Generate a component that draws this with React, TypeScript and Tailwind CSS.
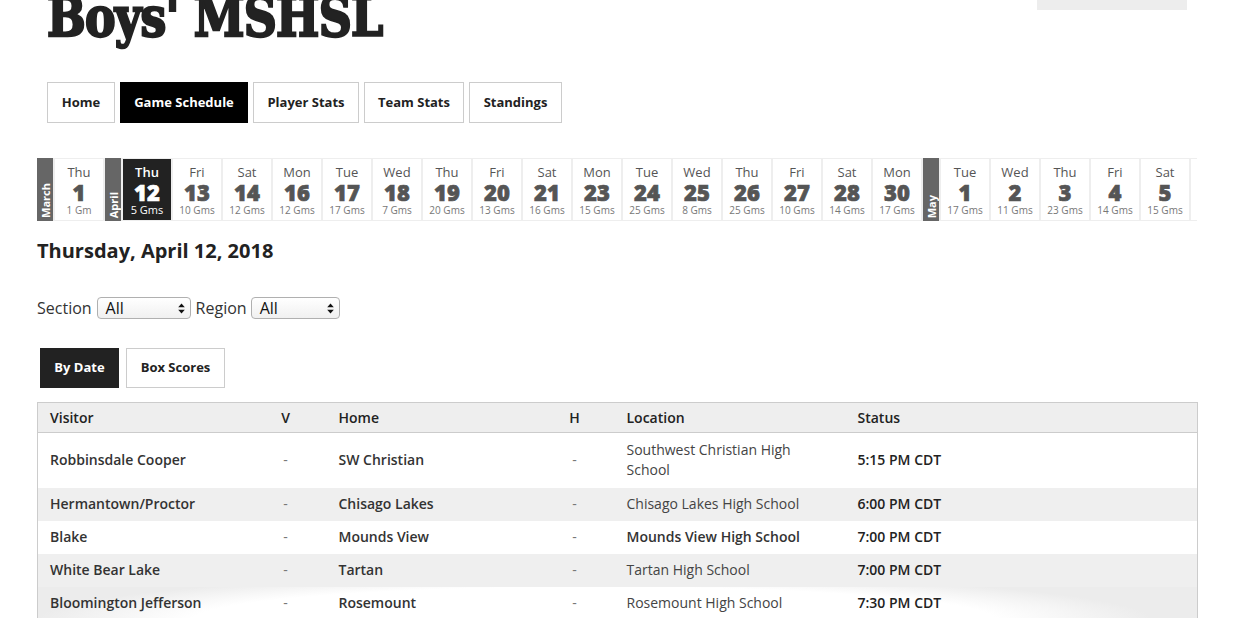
import React from "react";

type Day = { d: string; n: number; g: string; sel?: boolean };
type Seg = { month: string; days: Day[] };

const segs: Seg[] = [
  { month: "March", days: [{ d: "Thu", n: 1, g: "1 Gm" }] },
  {
    month: "April",
    days: [
      { d: "Thu", n: 12, g: "5 Gms", sel: true },
      { d: "Fri", n: 13, g: "10 Gms" },
      { d: "Sat", n: 14, g: "12 Gms" },
      { d: "Mon", n: 16, g: "12 Gms" },
      { d: "Tue", n: 17, g: "17 Gms" },
      { d: "Wed", n: 18, g: "7 Gms" },
      { d: "Thu", n: 19, g: "20 Gms" },
      { d: "Fri", n: 20, g: "13 Gms" },
      { d: "Sat", n: 21, g: "16 Gms" },
      { d: "Mon", n: 23, g: "15 Gms" },
      { d: "Tue", n: 24, g: "25 Gms" },
      { d: "Wed", n: 25, g: "8 Gms" },
      { d: "Thu", n: 26, g: "25 Gms" },
      { d: "Fri", n: 27, g: "10 Gms" },
      { d: "Sat", n: 28, g: "14 Gms" },
      { d: "Mon", n: 30, g: "17 Gms" },
    ],
  },
  {
    month: "May",
    days: [
      { d: "Tue", n: 1, g: "17 Gms" },
      { d: "Wed", n: 2, g: "11 Gms" },
      { d: "Thu", n: 3, g: "23 Gms" },
      { d: "Fri", n: 4, g: "14 Gms" },
      { d: "Sat", n: 5, g: "15 Gms" },
    ],
  },
];

type Row = {
  v: string;
  h: string;
  loc: string;
  locBold?: boolean;
  t: string;
  alt?: boolean;
  tall?: boolean;
  last?: boolean;
};

const rows: Row[] = [
  { v: "Robbinsdale Cooper", h: "SW Christian", loc: "Southwest Christian High School", t: "5:15 PM CDT", tall: true },
  { v: "Hermantown/Proctor", h: "Chisago Lakes", loc: "Chisago Lakes High School", t: "6:00 PM CDT", alt: true },
  { v: "Blake", h: "Mounds View", loc: "Mounds View High School", locBold: true, t: "7:00 PM CDT" },
  { v: "White Bear Lake", h: "Tartan", loc: "Tartan High School", t: "7:00 PM CDT", alt: true },
  { v: "Bloomington Jefferson", h: "Rosemount", loc: "Rosemount High School", t: "7:30 PM CDT", last: true },
];

function Arrows() {
  return (
    <svg width="7" height="11" viewBox="0 0 7 11" className="shrink-0">
      <path d="M3.5 0.5 L6.8 4.3 L0.2 4.3 Z" fill="#111" />
      <path d="M3.5 10.5 L6.8 6.7 L0.2 6.7 Z" fill="#111" />
    </svg>
  );
}

function FakeSelect({ w }: { w: string }) {
  return (
    <div
      className={`${w} h-[22px] rounded-[4px] border border-[#b0b0b0] bg-[linear-gradient(#ffffff,#f0f0f0)] flex items-center justify-between pl-[8px] pr-[5px] text-[16px] text-[#111] leading-none`}
    >
      <span>All</span>
      <Arrows />
    </div>
  );
}

export default function App() {
  return (
    <div className="relative w-[1241px] h-[618px] overflow-hidden bg-white font-['Open_Sans',sans-serif] text-[#222]">
      <div className="ml-[37px] w-[1160px]">
        <header className="flex justify-between items-start h-[60px]">
          <h1 className="ml-[10px] -mt-[13px] origin-left scale-x-[0.85] font-['DejaVu_Serif',serif] font-bold text-[54px] leading-[60px] tracking-[-1px] text-[#222] [-webkit-text-stroke:2.4px_#222] whitespace-nowrap">
            Boys' MSHSL
          </h1>
          <div className="w-[150px] h-[10px] bg-[#ededed] mr-[10px]" />
        </header>

        <nav className="ml-[10px] mt-[22px] flex gap-[5px] text-[13px] font-bold">
          <div className="w-[68px] h-[41px] border border-[#ccc] flex items-center justify-center">Home</div>
          <div className="w-[128px] h-[41px] border border-black bg-black text-white flex items-center justify-center">Game Schedule</div>
          <div className="w-[106px] h-[41px] border border-[#ccc] flex items-center justify-center">Player Stats</div>
          <div className="w-[100px] h-[41px] border border-[#ccc] flex items-center justify-center">Team Stats</div>
          <div className="w-[93px] h-[41px] border border-[#ccc] flex items-center justify-center">Standings</div>
        </nav>

        <div className="mt-[35px] h-[63px] flex gap-[2px] bg-[#eeeeee] overflow-hidden">
          {segs.map((s) => (
            <React.Fragment key={s.month}>
              <div className="w-[16px] shrink-0 bg-[#666] flex flex-col justify-end items-center pb-[3px]">
                <span className="[writing-mode:vertical-rl] rotate-180 text-[11px] font-bold text-white leading-none">
                  {s.month}
                </span>
              </div>
              {s.days.map((d) => (
                <div
                  key={s.month + d.n}
                  className={`w-[48px] shrink-0 my-[1px] flex flex-col items-center pt-[5px] ${
                    d.sel ? "bg-[#222] text-white" : "bg-white text-[#555]"
                  }`}
                >
                  <div className={`text-[13px] leading-[16px] ${d.sel ? "font-semibold" : ""}`}>{d.d}</div>
                  <div className="text-[22px] leading-[24px] font-extrabold [-webkit-text-stroke:0.7px_currentColor]">{d.n}</div>
                  <div className={`leading-[12px] ${d.sel ? "text-white text-[11px]" : "text-[#777] text-[10px]"}`}>{d.g}</div>
                </div>
              ))}
            </React.Fragment>
          ))}
          <div className="w-[48px] shrink-0 my-[1px] bg-white" />
        </div>

        <h2 className="mt-[16px] text-[20px] leading-[28px] font-bold text-[#222]">Thursday, April 12, 2018</h2>

        <div className="mt-[32px] h-[22px] flex items-center text-[16px] text-[#333]">
          <span>Section</span>
          <span className="w-[5px]" />
          <FakeSelect w="w-[94px]" />
          <span className="w-[5px]" />
          <span>Region</span>
          <span className="w-[4px]" />
          <FakeSelect w="w-[89px]" />
        </div>

        <div className="mt-[29px] ml-[3px] flex gap-[7px] text-[13px] font-bold">
          <div className="w-[79px] h-[40px] bg-[#222] text-white flex items-center justify-center">By Date</div>
          <div className="w-[99px] h-[40px] border border-[#ccc] text-[#222] flex items-center justify-center">Box Scores</div>
        </div>

        <table className="mt-[14px] w-[1160px] table-fixed border-collapse border-x border-[#ccc] text-[14px] leading-[20px]">
          <colgroup>
            <col className="w-[207px]" />
            <col className="w-[82px]" />
            <col className="w-[208px]" />
            <col className="w-[80px]" />
            <col className="w-[231px]" />
            <col className="w-[352px]" />
          </colgroup>
          <thead>
            <tr className="h-[30px] bg-[#eeeeee] border-y border-[#ccc] text-[#222]">
              <th className="text-left font-semibold px-[12px]">Visitor</th>
              <th className="text-center font-semibold">V</th>
              <th className="text-left font-semibold px-[12px]">Home</th>
              <th className="text-center font-semibold">H</th>
              <th className="text-left font-semibold px-[12px]">Location</th>
              <th className="text-left font-semibold px-[12px]">Status</th>
            </tr>
          </thead>
          <tbody>
            {rows.map((r) => (
              <tr
                key={r.v}
                className={`${r.tall ? "h-[55px]" : "h-[33px]"} ${
                  r.alt
                    ? "bg-[#efefef]"
                    : r.last
                    ? "bg-[radial-gradient(ellipse_48%_140%_at_48%_100%,#ffffff_72%,#ececec_100%)]"
                    : "bg-white"
                }`}
              >
                <td className="px-[12px] font-semibold text-[#333]">{r.v}</td>
                <td className="text-center text-[#777]">-</td>
                <td className="px-[12px] font-semibold text-[#333]">{r.h}</td>
                <td className="text-center text-[#777]">-</td>
                <td className={`px-[12px] ${r.locBold ? "font-semibold text-[#333]" : "text-[#444]"}`}>{r.loc}</td>
                <td className="px-[12px] font-semibold text-[#222]">{r.t}</td>
              </tr>
            ))}
          </tbody>
        </table>
      </div>
    </div>
  );
}
